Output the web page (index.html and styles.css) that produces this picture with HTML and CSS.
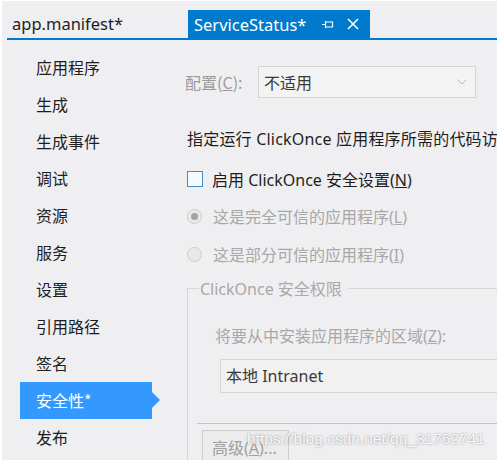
FILE: index.html
```html
<!DOCTYPE html>
<html lang="zh-CN">
<head>
<meta charset="utf-8">
<title>app.manifest - 安全性</title>
<link rel="stylesheet" href="styles.css">
</head>
<body>
<div class="page">
  <div class="tabstrip">
    <div class="tab">app.manifest*</div>
    <div class="tab active">
      <span class="tab-title">ServiceStatus*</span>
      <svg class="pin" width="12" height="9" viewBox="0 0 12 9"><path d="M0 4.5H3.5M3.5 1V8M3.5 2H10.5V7H3.5" fill="none" stroke="#fff" stroke-width="1.2"/></svg>
      <svg class="close" width="12" height="12" viewBox="0 0 12 12"><path d="M1 1L11 11M11 1L1 11" fill="none" stroke="#fff" stroke-width="1.6"/></svg>
    </div>
  </div>
  <div class="main">
    <nav class="nav">
      <div class="nav-item">应用程序</div>
      <div class="nav-item">生成</div>
      <div class="nav-item">生成事件</div>
      <div class="nav-item">调试</div>
      <div class="nav-item">资源</div>
      <div class="nav-item">服务</div>
      <div class="nav-item">设置</div>
      <div class="nav-item">引用路径</div>
      <div class="nav-item">签名</div>
      <div class="nav-item selected">安全性*</div>
      <div class="nav-item">发布</div>
    </nav>
    <section class="content">
      <div class="config-row">
        <span class="config-label">配置(<u>C</u>):</span>
        <div class="select">
          <span>不适用</span>
          <svg width="10" height="6" viewBox="0 0 10 6"><path d="M0.5 0.5L5 5L9.5 0.5" fill="none" stroke="#b5b5b5" stroke-width="1"/></svg>
        </div>
      </div>
      <div class="sep"></div>
      <div class="desc">指定运行 ClickOnce 应用程序所需的代码访问安全权限。</div>
      <div class="check-row">
        <span class="checkbox"></span>
        <span>启用 ClickOnce 安全设置(<u>N</u>)</span>
      </div>
      <div class="radio-row first">
        <span class="radio checked"></span>
        <span>这是完全可信的应用程序(<u>L</u>)</span>
      </div>
      <div class="radio-row">
        <span class="radio"></span>
        <span>这是部分可信的应用程序(<u>I</u>)</span>
      </div>
      <div class="group">
        <div class="group-head">
          <span class="group-seg"></span>
          <span class="group-title">ClickOnce 安全权限</span>
          <span class="group-line"></span>
        </div>
        <div class="group-body">
          <div class="zone-label">将要从中安装应用程序的区域(<u>Z</u>):</div>
          <div class="zone-input">本地 Intranet</div>
          <div class="sep2"></div>
          <div class="button">高级(<u>A</u>)...</div>
        </div>
      </div>
    </section>
  </div>
  <div class="watermark">https://blog.csdn.net/qq_31762741</div>
</div>
</body>
</html>
```

FILE: styles.css
```css
* { box-sizing: border-box; }
html, body { margin: 0; padding: 0; }
body {
  background: #fff;
  font-family: "Noto Sans", "Noto Sans CJK SC", sans-serif;
  font-size: 16px;
  color: #1e1e1e;
  overflow: hidden;
}
.page {
  position: relative;
  width: 497px;
  height: 460px;
  margin-left: 2px;
  margin-top: 1px;
  background: #efeff1;
  overflow: hidden;
}
.tabstrip {
  display: flex;
  height: 39px;
  padding-top: 9px;
  margin-left: 5px;
  border-bottom: 2px solid #007acc;
}
.tab {
  height: 28px;
  line-height: 27px;
  padding-left: 5px;
  width: 181px;
  white-space: nowrap;
  font-size: 16.5px;
}
.tab.active {
  display: flex;
  align-items: center;
  width: 182px;
  background: #007acc;
  color: #fff;
  padding-left: 6px;
}
.tab-title { line-height: 27px; }
.pin { margin-left: 16px; margin-top: 1px; }
.close { margin-left: 13px; }
.main {
  display: flex;
  height: 420px;
}
.nav {
  width: 183px;
  flex: none;
  padding-top: 9px;
  padding-left: 18px;
}
.nav-item {
  position: relative;
  height: 37px;
  line-height: 37px;
  width: 132px;
  padding-left: 16px;
  font-family: "Noto Sans CJK SC", sans-serif;
  font-size: 16px;
  color: #1e1e1e;
}
.nav-item.selected {
  background: #3399ff;
  color: #fff;
}
.nav-item.selected::after {
  content: "";
  position: absolute;
  right: -8px;
  top: 10px;
  border-top: 8px solid transparent;
  border-bottom: 8px solid transparent;
  border-left: 8px solid #3399ff;
}
.content {
  flex: 1;
  min-width: 0;
  display: flex;
  flex-direction: column;
  white-space: nowrap;
}
.config-row {
  display: flex;
  align-items: center;
  margin-top: 26px;
  height: 32px;
  color: #9a9a9a;
}
.config-label {
  width: 73px;
  font-family: "Noto Sans CJK SC", sans-serif;
}
.select {
  display: flex;
  align-items: center;
  justify-content: space-between;
  width: 218px;
  height: 32px;
  border: 1px solid #d4d4d4;
  background: #f3f3f4;
  padding: 0 8px 0 5px;
  color: #3a3a3a;
  font-family: "Noto Sans CJK SC", sans-serif;
}
.sep {
  margin-top: 22px;
  margin-left: -5px;
  height: 2px;
  background: #b4b4b4;
}
.desc {
  margin-top: 9px;
  margin-left: 2px;
  height: 20px;
  line-height: 20px;
  color: #1e1e1e;
  letter-spacing: 0.2px;
}
.check-row, .radio-row {
  display: flex;
  align-items: center;
  height: 20px;
  margin-top: 20px;
  margin-left: 2px;
}
.check-row span:last-child { margin-left: 9px; }
.checkbox {
  width: 16px;
  height: 16px;
  border: 1px solid #3c8dd0;
  background: #f6fafe;
}
.radio-row { color: #a8a8a8; margin-top: 17px; }
.radio-row + .radio-row { margin-top: 18px; }
.radio-row span:last-child { margin-left: 11px; }
.radio {
  position: relative;
  width: 15px;
  height: 15px;
  border-radius: 50%;
  border: 1px solid #cdcdcd;
  background: #e9e9ea;
}
.radio.checked::after {
  content: "";
  position: absolute;
  left: 3px;
  top: 3px;
  width: 7px;
  height: 7px;
  border-radius: 50%;
  background: #a3a3a3;
}
.group {
  margin-top: 14px;
  margin-left: 2px;
  flex: 1;
  display: flex;
  flex-direction: column;
}
.group-head {
  display: flex;
  align-items: center;
  height: 20px;
  color: #a8a8a8;
}
.group-seg {
  align-self: flex-end;
  width: 12px;
  height: 10px;
  border-top: 1px solid #d6d6d6;
  border-left: 1px solid #d6d6d6;
}
.group-title { padding: 0 6px 0 1px; }
.group-line {
  flex: 1;
  border-top: 1px solid #d6d6d6;
}
.group-body {
  flex: 1;
  border-left: 1px solid #d6d6d6;
  display: flex;
  flex-direction: column;
}
.zone-label {
  margin-top: 28px;
  margin-left: 27px;
  height: 20px;
  line-height: 20px;
  color: #a8a8a8;
}
.zone-input {
  margin-top: 13px;
  margin-left: 32px;
  width: 400px;
  height: 34px;
  line-height: 32px;
  border: 1px solid #d4d4d4;
  background: #f1f1f2;
  padding-left: 5px;
  color: #3a3a3a;
}
.sep2 {
  margin-top: 30px;
  margin-left: 9px;
  height: 1px;
  background: #c4c4c4;
}
.button {
  margin-top: 6px;
  margin-left: 14px;
  width: 87px;
  height: 36px;
  line-height: 34px;
  border: 1px solid #cdcdcd;
  background: #ececed;
  padding-left: 9px;
  color: #a0a0a0;
}
.watermark {
  position: absolute;
  left: 245px;
  top: 429px;
  font-family: "Liberation Sans", Arial, sans-serif;
  font-size: 15.5px;
  color: rgba(255, 255, 255, 0.95);
  text-shadow: 0 0 2px rgba(90, 90, 90, 0.7);
}
```
